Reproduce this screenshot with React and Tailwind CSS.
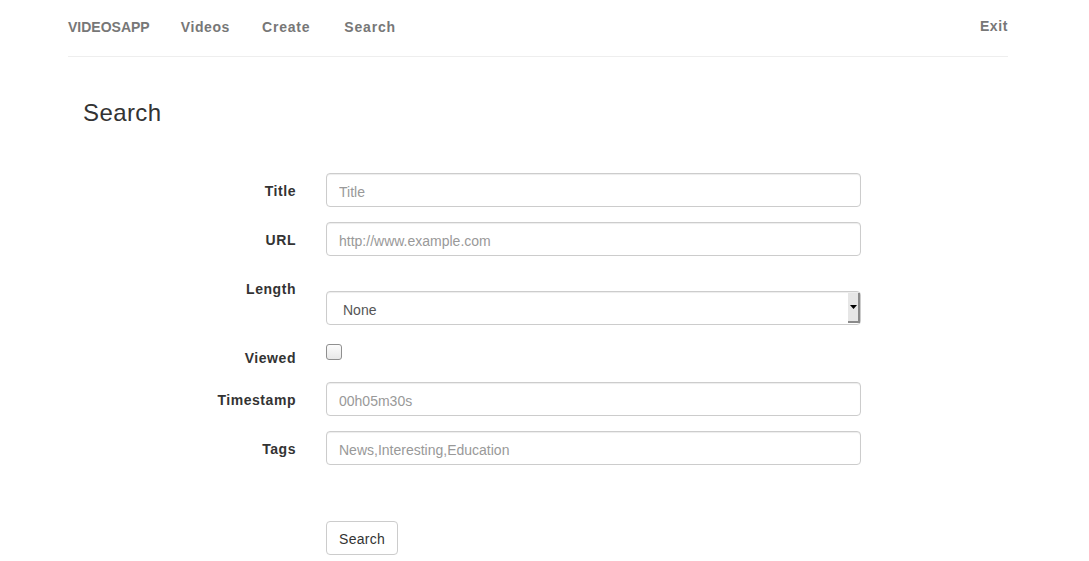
import { useState } from 'react';

const font = { fontFamily: '"Liberation Sans", Arial, sans-serif' };

const inputCls =
  'w-[535px] h-[34px] px-3 pt-[3px] border border-[#cccccc] rounded-[4px] text-[14px] text-[#555] placeholder:text-[#999] outline-none shadow-[inset_0_1px_1px_rgba(0,0,0,0.075)] bg-white';

const labelCls =
  'w-[228px] shrink-0 text-right font-bold text-[14px] text-[#333] pt-[8px] leading-[20px] tracking-[0.55px]';

const Row = ({ label, children, className = 'mb-[15px]' }) => (
  <div className={`flex gap-[30px] ${className}`}>
    <label className={labelCls}>{label}</label>
    <div>{children}</div>
  </div>
);

export default function App() {
  const [viewed, setViewed] = useState(false);

  return (
    <div className="min-h-screen bg-white" style={font}>
      <div className="w-[940px] ml-[68px]">
        {/* Top nav */}
        <nav className="h-[57px] border-b border-[#eeeeee] flex items-start justify-between">
          <div className="flex items-center pt-[17px] text-[14px] font-bold text-[#777] leading-[20px]">
            <span className="mr-[31px]">VIDEOSAPP</span>
            <span className="mr-[32px] tracking-[0.6px]">Videos</span>
            <span className="mr-[34px] tracking-[0.8px]">Create</span>
            <span className="tracking-[0.8px]">Search</span>
          </div>
          <div className="pt-[16px] text-[14px] font-bold text-[#777] leading-[20px] tracking-[0.6px]">Exit</div>
        </nav>

        <h3 className="ml-[15px] mt-[42px] text-[24px] leading-[28px] text-[#333] font-normal tracking-[0.4px]">Search</h3>

        <form className="mt-[46px]">
          <Row label="Title">
            <input className={inputCls} placeholder="Title" />
          </Row>
          <Row label="URL">
            <input className={inputCls} placeholder="http://www.example.com" />
          </Row>
          <Row label="Length">
            <div className="mt-[20px] relative w-[535px] h-[34px] border border-[#cccccc] rounded-[4px] bg-white text-[14px] text-[#555] flex items-center pl-[16px] shadow-[inset_0_1px_1px_rgba(0,0,0,0.075)]">
              <span className="mt-[5px]">None</span>
              <div className="absolute right-0 top-[1px] bottom-[1px] w-[12px] bg-[#e6e6e6] border-r-2 border-b-2 border-[#8a8a8a] flex items-center justify-center">
                <svg width="7" height="4" viewBox="0 0 7 4">
                  <path d="M0 0h7L3.5 4z" fill="#000" />
                </svg>
              </div>
            </div>
          </Row>
          <Row label="Viewed" className="mb-[14px]">
            <button
              type="button"
              onClick={() => setViewed(!viewed)}
              className="mt-[4px] w-[16px] h-[16px] rounded-[3px] border border-[#8f8f8f] bg-gradient-to-b from-[#fcfcfc] to-[#e8e8e8] flex items-center justify-center text-[11px]"
            >
              {viewed ? '✓' : ''}
            </button>
          </Row>
          <Row label="Timestamp">
            <input className={inputCls} placeholder="00h05m30s" />
          </Row>
          <Row label="Tags">
            <input className={inputCls} placeholder="News,Interesting,Education" />
          </Row>

          <div className="ml-[258px] mt-[56px]">
            <button
              type="button"
              className="h-[34px] px-[12px] pt-[2px] border border-[#cccccc] rounded-[4px] bg-white text-[14px] text-[#333] tracking-[0.3px]"
            >
              Search
            </button>
          </div>
        </form>
      </div>
    </div>
  );
}
